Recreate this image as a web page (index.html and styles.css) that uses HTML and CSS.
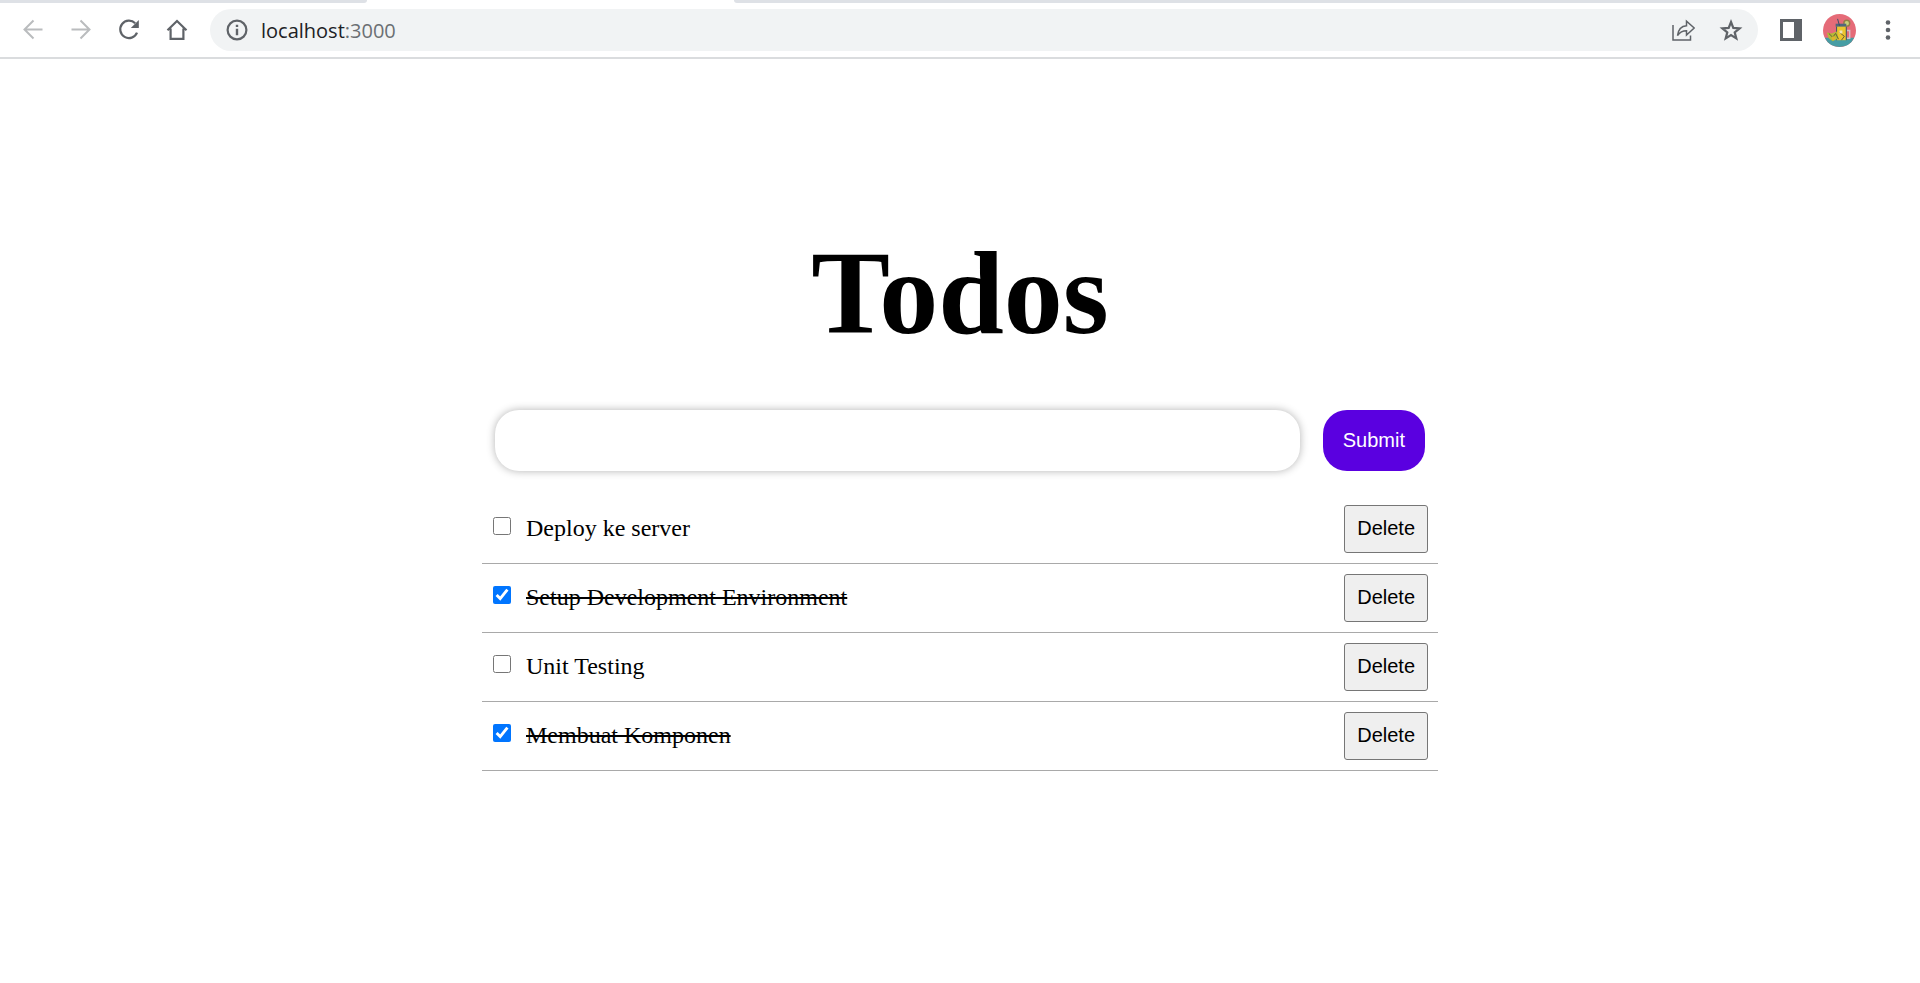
FILE: index.html
```html
<!DOCTYPE html>
<html lang="id">
<head>
<meta charset="utf-8">
<title>Todos</title>
<link rel="stylesheet" href="styles.css">
</head>
<body>
<header class="browser">
  <div class="tabs"><span class="tab-left"></span><span class="tab-active"></span><span class="tab-rest"></span></div>
  <div class="toolbar">
    <nav class="nav" aria-label="Browser">
      <button class="icon-button dim" aria-label="Back"><svg viewBox="0 0 24 24" class="line"><path d="M21.5 11.5H3.500M12.500 2.500l-9 9 9 9"/></svg></button>
      <button class="icon-button dim" aria-label="Forward"><svg viewBox="0 0 24 24" class="line"><path d="M2.500 11.500H20.500M11.500 2.500l9 9-9 9"/></svg></button>
      <button class="icon-button" aria-label="Reload"><svg viewBox="0 0 24 24"><path class="bold" d="M18.200 5.300A8.700 8.700 0 1 0 20 14.700"/><path class="solid" d="M21.800 2v8h-8z"/></svg></button>
      <button class="icon-button" aria-label="Home"><svg viewBox="0 0 24 24"><path class="bold" d="M2.500 12.200L12 3l9.500 9.200M5.600 10.500v10.300h12.800V10.500"/></svg></button>
    </nav>
    <div class="address">
      <svg class="info" viewBox="0 0 24 24"><circle class="bold" cx="12" cy="12" r="9.400"/><path class="solid" d="M10.800 6.700h2.400v2.400h-2.400zM10.800 10.700h2.400v6.600h-2.400z"/></svg>
      <span class="url">localhost<span class="port">:3000</span></span>
      <div class="address-actions">
        <button class="icon-button" aria-label="Share"><svg viewBox="0 0 24 24"><path class="thin" d="M2 7v15h17.500v-4.500M6.500 17.500c.8-6 4-9.500 9-9.800V3.200l7.700 6.800-7.700 7v-4.200c-4 0-6.700 1.500-9 4.700z"/></svg></button>
        <button class="icon-button" aria-label="Bookmark"><svg viewBox="0 0 24 24"><path class="bold" d="M12 4l2.300 5.900 6.300.4-4.900 4 1.600 6.100-5.300-3.400-5.300 3.400 1.600-6.100-4.900-4 6.300-.4z"/></svg></button>
      </div>
    </div>
    <div class="tools">
      <button class="icon-button" aria-label="Side panel"><svg viewBox="0 0 24 24"><path class="solid" fill-rule="evenodd" d="M1 1h22v22H1zM4 4v16h11V4z"/></svg></button>
      <button class="avatar" aria-label="Profile"><svg viewBox="0 0 34 34"><circle cx="17" cy="17" r="17" fill="#e56b78"/><path d="M1.800 24.500h30.400a17 17 0 0 1-30.400 0z" fill="#469da4"/><circle cx="24.500" cy="9.500" r="3" fill="#c8cf77" stroke="#947d46" stroke-width="1.500"/><path d="M14 12h10v15H14z" fill="#ecc52d"/><path d="M13 10h11v3H13z" fill="#51667c"/><path d="M24.500 17h3v8h-3" fill="none" stroke="#d4bec5" stroke-width="1.500"/><path d="M17 12l-2-7M14 13v14M24 13v14" fill="none" stroke="#354e66"/><path d="M4 19l5 1 5-2 2 7-6 3-4-3z" fill="#b3bc35"/><path d="M6 20l4 4 3-4 3 6M17 19l5 4-3 4" fill="none" stroke="#645c38"/><path d="M17 17h3v3h-3z" fill="#eee6bc"/><circle cx="11" cy="25" r="2" fill="#dfb42e"/></svg></button>
      <button class="icon-button" aria-label="Menu"><svg viewBox="0 0 24 24"><circle class="solid" cx="12" cy="4.500" r="2.300"/><circle class="solid" cx="12" cy="12" r="2.300"/><circle class="solid" cx="12" cy="19.500" r="2.300"/></svg></button>
    </div>
  </div>
</header>
<main class="page">
  <div class="todos">
    <h1 class="title">Todos</h1>
    <form class="add-form">
      <input class="new-todo" type="text" aria-label="New todo">
      <button class="submit" type="button">Submit</button>
    </form>
    <ul class="list">
      <li class="item"><input class="check" type="checkbox" id="t1"><label class="name" for="t1">Deploy ke server</label><button class="delete">Delete</button></li>
      <li class="item"><input class="check" type="checkbox" id="t2" checked><label class="name" for="t2">Setup Development Environment</label><button class="delete">Delete</button></li>
      <li class="item"><input class="check" type="checkbox" id="t3"><label class="name" for="t3">Unit Testing</label><button class="delete">Delete</button></li>
      <li class="item"><input class="check" type="checkbox" id="t4" checked><label class="name" for="t4">Membuat Komponen</label><button class="delete">Delete</button></li>
    </ul>
  </div>
</main>
</body>
</html>
```
FILE: styles.css
```css
* { box-sizing: border-box; }

body {
  margin: 0;
  background: #fff;
  color: #000;
  font-family: "Liberation Serif", "Times New Roman", serif;
}

button { cursor: pointer; }

/* Browser bar */
.browser { border-bottom: 2px solid #dadcde; }
.tabs { display: flex; height: 3px; }
.tab-left, .tab-rest { background: #dee1e6; }
.tab-left { width: 367px; border-bottom-right-radius: 4px; }
.tab-active { width: 367px; }
.tab-rest { flex: 1; border-bottom-left-radius: 4px; }

.toolbar {
  display: flex;
  align-items: center;
  padding: 6px 20px 6px 21px;
}
.nav { display: flex; gap: 24px; margin-right: 21px; }
.icon-button {
  display: flex;
  width: 24px;
  height: 24px;
  padding: 0;
  border: 0;
  background: none;
  color: #5f6368;
}
.icon-button svg { width: 24px; height: 24px; }
.icon-button.dim { color: #babcbe; }

.line, .bold, .thin { fill: none; stroke: currentColor; stroke-width: 2; }
.bold { stroke-width: 2.2; }
.thin { stroke-width: 1.5; }
.solid { fill: currentColor; }

.address {
  display: flex;
  flex: 1;
  align-items: center;
  height: 42px;
  padding: 0 15px;
  border-radius: 21px;
  background: #f1f3f4;
}
.info { width: 24px; height: 24px; color: #5f6368; }
.url {
  flex: 1;
  margin-left: 12px;
  padding-top: 2px;
  font: 20px/28px "Open Sans", "Noto Sans", sans-serif;
  color: #202124;
}
.port { color: #6b6f73; }
.address-actions { display: flex; gap: 24px; }
.tools { display: flex; align-items: center; gap: 20px; margin-left: 21px; }
.avatar {
  display: flex;
  width: 33px;
  height: 33px;
  padding: 0;
  border: 0;
  border-radius: 50%;
  background: none;
}
.avatar svg { width: 33px; height: 33px; }

/* Todo page */
.page { padding: 167px 4px 40px; }
.todos { width: 50%; margin: 0 auto; }
.title {
  margin: 0 0 48px;
  font-size: 118px;
  line-height: 136px;
  text-align: center;
}
.add-form {
  display: flex;
  gap: 23px;
  margin-bottom: 24px;
  padding: 0 13px;
}
.new-todo {
  flex: 1;
  min-width: 0;
  padding: 0 20px;
  border: 0;
  border-radius: 24px;
  background: #fff;
  box-shadow: 0 0 8px rgba(0, 0, 0, 0.3);
  font: 20px "Liberation Sans", Arial, sans-serif;
}
.submit {
  height: 61px;
  padding: 0 20px;
  border: 0;
  border-radius: 24px;
  background: #5a00e0;
  color: #fff;
  font: 20px "Liberation Sans", Arial, sans-serif;
}
.list { margin: 0; padding: 0; list-style: none; }
.item {
  display: flex;
  align-items: center;
  padding: 10px;
  border-bottom: 1px solid #a9a9a9;
}
.check {
  width: 18px;
  height: 18px;
  margin: 0 15px 6px 1px;
}
.name {
  flex: 1;
  padding-bottom: 2px;
  font-size: 24px;
  line-height: 28px;
}
.check:checked + .name { text-decoration: line-through; }
.delete {
  height: 48px;
  padding: 0 12px 2px;
  border: 1px solid #767676;
  border-radius: 3px;
  background: #efefef;
  color: #000;
  font: 20px "Liberation Sans", Arial, sans-serif;
}
```
